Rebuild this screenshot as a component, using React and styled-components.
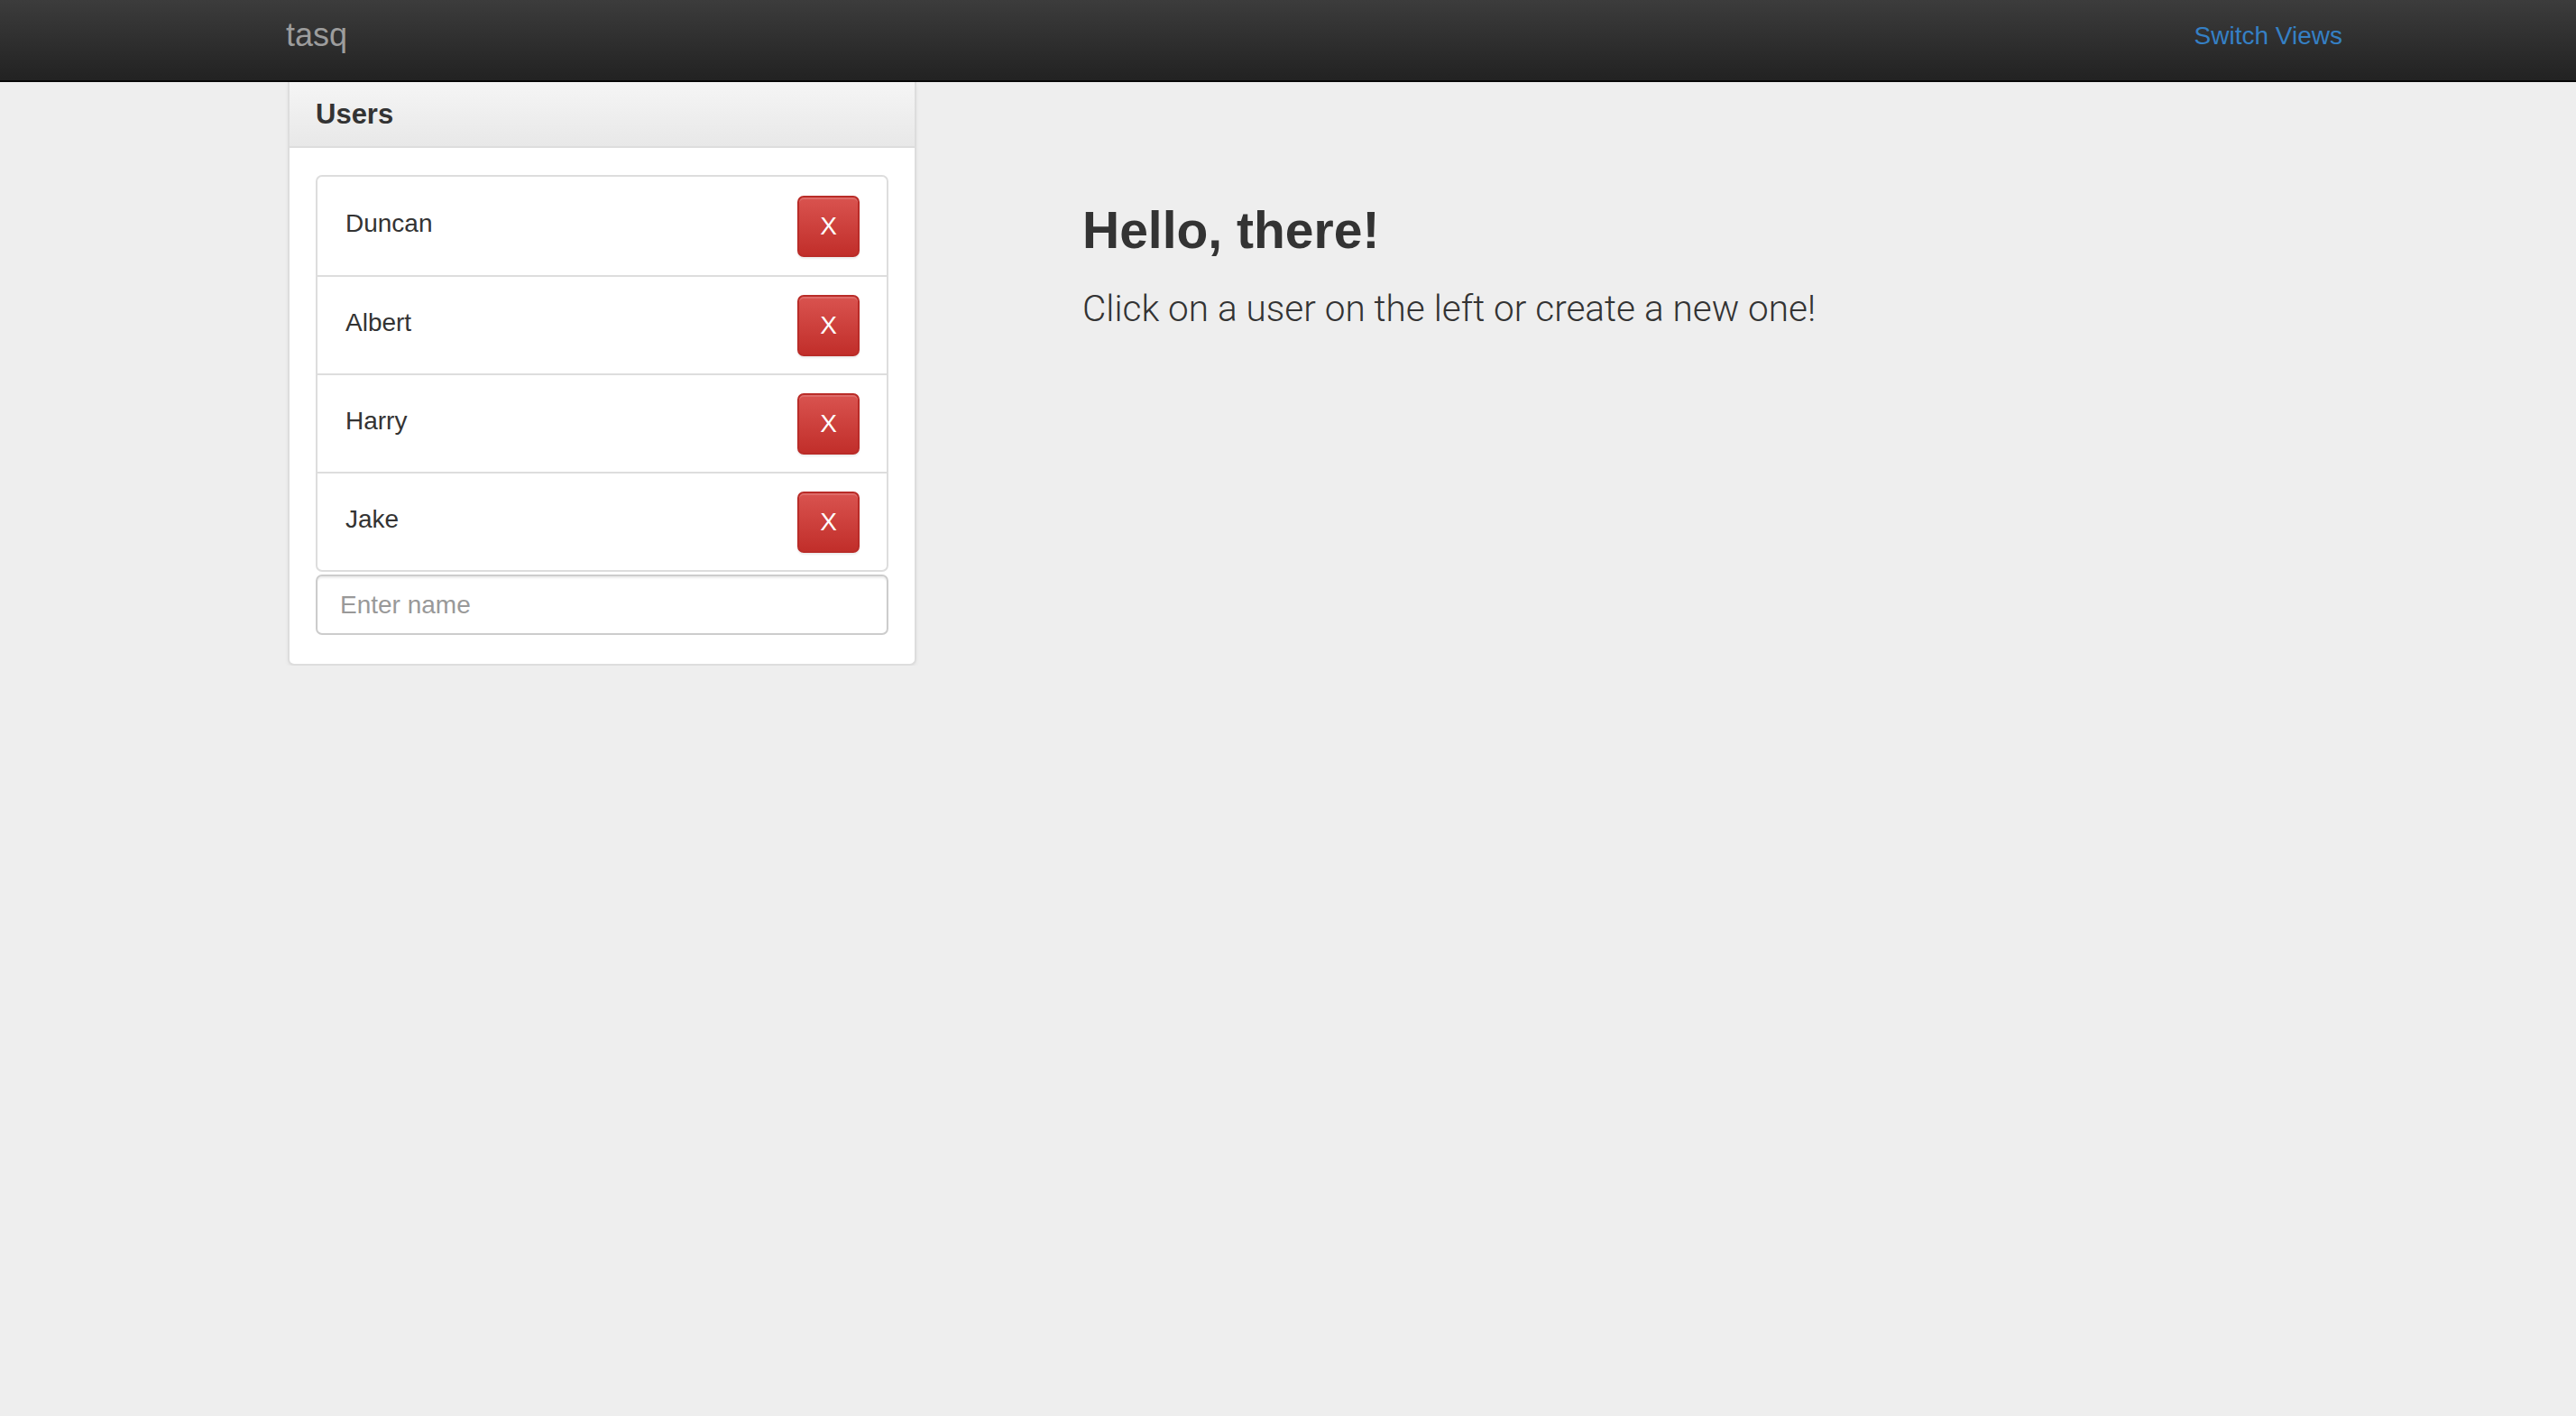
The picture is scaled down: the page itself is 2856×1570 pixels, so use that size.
import styled, { createGlobalStyle } from 'styled-components';

const USERS = ['Duncan', 'Albert', 'Harry', 'Jake'];

const GlobalStyle = createGlobalStyle`
  html, body {
    margin: 0;
    padding: 0;
    background: #eeeeee;
    font-family: "Liberation Sans", Arial, sans-serif;
    color: #333333;
  }
  * {
    box-sizing: border-box;
  }
`;

const Navbar = styled.nav`
  display: flex;
  align-items: flex-start;
  justify-content: space-between;
  height: 91px;
  padding: 0 259px 0 317px;
  background: linear-gradient(to bottom, #3c3c3c 0%, #222222 100%);
  border-bottom: 2px solid #080808;
`;

const Brand = styled.a`
  margin-top: 21px;
  font-size: 36px;
  line-height: 36px;
  color: #9d9d9d;
  text-decoration: none;
`;

const NavLink = styled.a`
  margin-top: 26px;
  font-size: 28px;
  line-height: 28px;
  color: #3580c5;
  text-decoration: none;
`;

const Main = styled.main`
  display: flex;
  align-items: flex-start;
  gap: 184px;
  padding-left: 319px;
`;

const Panel = styled.section`
  width: 697px;
  flex-shrink: 0;
  background: #ffffff;
  border: 2px solid #dddddd;
  border-top: none;
  border-radius: 0 0 7px 7px;
  box-shadow: 0 2px 4px rgba(0, 0, 0, 0.05);
`;

const PanelHeading = styled.header`
  display: flex;
  align-items: center;
  height: 73px;
  padding: 0 29px;
  background: linear-gradient(to bottom, #f5f5f5 0%, #e8e8e8 100%);
  border-bottom: 2px solid #dddddd;
`;

const PanelTitle = styled.h3`
  margin: 0;
  font-size: 31px;
  font-weight: 700;
  color: #333333;
`;

const PanelBody = styled.div`
  display: flex;
  flex-direction: column;
  gap: 3px;
  padding: 30px 29px 32px;
`;

const ListGroup = styled.ul`
  margin: 0;
  padding: 0;
  list-style: none;
  border: 2px solid #dddddd;
  border-radius: 7px;
`;

const ListItem = styled.li`
  display: flex;
  align-items: center;
  justify-content: space-between;
  height: 109px;
  padding: 0 30px 0 31px;
  font-size: 28px;
  color: #333333;
  & + & {
    border-top: 2px solid #dddddd;
  }
`;

const UserName = styled.span`
  margin-top: -6px;
`;

const DeleteButton = styled.button`
  display: flex;
  align-items: center;
  justify-content: center;
  width: 69px;
  height: 68px;
  padding: 0;
  font-family: "Liberation Sans", Arial, sans-serif;
  font-size: 28px;
  color: #ffffff;
  background: linear-gradient(to bottom, #d9534f 0%, #c12e2a 100%);
  border: 2px solid #b92c28;
  border-radius: 7px;
  box-shadow: inset 0 2px 0 rgba(255, 255, 255, 0.15), 0 2px 2px rgba(0, 0, 0, 0.075);
`;

const NameInput = styled.input`
  width: 100%;
  height: 67px;
  padding: 0 25px;
  font-family: "Liberation Sans", Arial, sans-serif;
  font-size: 28px;
  color: #555555;
  background: #ffffff;
  border: 2px solid #cccccc;
  border-radius: 7px;
  box-shadow: inset 0 2px 2px rgba(0, 0, 0, 0.075);
  outline: none;
  &::placeholder {
    color: #999999;
  }
`;

const Welcome = styled.div`
  padding-top: 133px;
`;

const Title = styled.h1`
  margin: 0;
  font-size: 57px;
  line-height: 1.1;
  font-weight: 700;
  color: #333333;
`;

const Lead = styled.p`
  margin: 27px 0 0;
  font-family: Roboto, "Liberation Sans", sans-serif;
  font-weight: 300;
  font-size: 40.5px;
  line-height: 1.4;
  color: #333333;
`;

export default function App() {
  return (
    <>
      <GlobalStyle />
      <Navbar>
        <Brand href="#">tasq</Brand>
        <NavLink href="#">Switch Views</NavLink>
      </Navbar>
      <Main>
        <Panel>
          <PanelHeading>
            <PanelTitle>Users</PanelTitle>
          </PanelHeading>
          <PanelBody>
            <ListGroup>
              {USERS.map((name) => (
                <ListItem key={name}>
                  <UserName>{name}</UserName>
                  <DeleteButton>X</DeleteButton>
                </ListItem>
              ))}
            </ListGroup>
            <NameInput placeholder="Enter name" />
          </PanelBody>
        </Panel>
        <Welcome>
          <Title>Hello, there!</Title>
          <Lead>Click on a user on the left or create a new one!</Lead>
        </Welcome>
      </Main>
    </>
  );
}
